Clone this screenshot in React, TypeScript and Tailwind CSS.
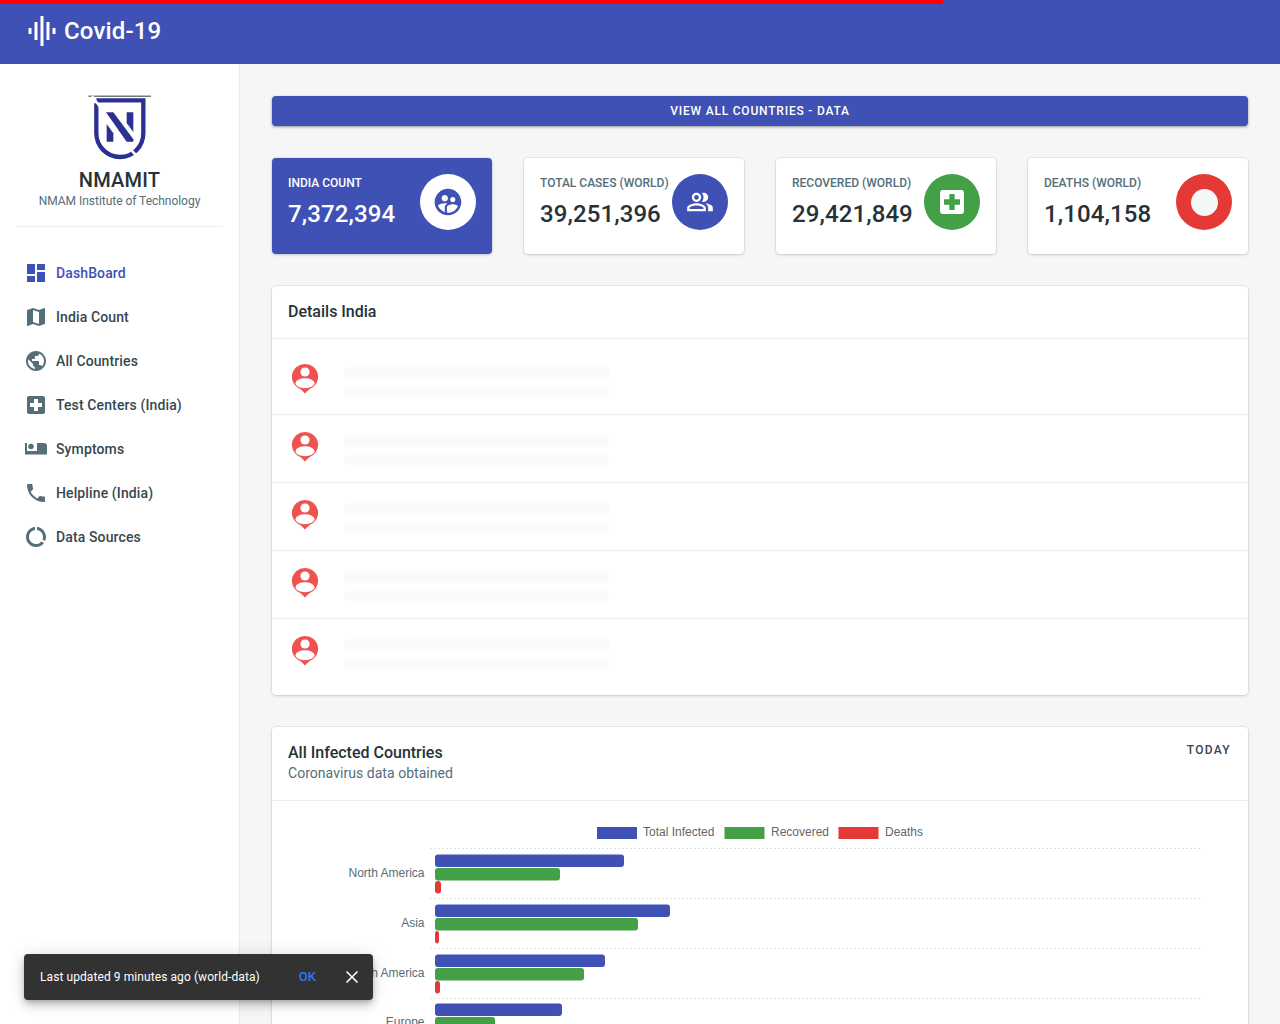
import React from 'react';

const P = {
  dashboard: 'M3 13h8V3H3v10zm0 8h8v-6H3v6zm10 0h8V11h-8v10zm0-18v6h8V3h-8z',
  map: 'M20.5 3l-.16.03L15 5.1 9 3 3.36 4.9c-.21.07-.36.25-.36.48V20.5c0 .28.22.5.5.5l.16-.03L9 18.9l6 2.1 5.64-1.9c.21-.07.36-.25.36-.48V3.5c0-.28-.22-.5-.5-.5zM15 19l-6-2.11V5l6 2.11V19z',
  globe: 'M12 2C6.48 2 2 6.48 2 12s4.48 10 10 10 10-4.48 10-10S17.52 2 12 2zm-1 17.93c-3.95-.49-7-3.85-7-7.93 0-.62.08-1.21.21-1.79L9 15v1c0 1.1.9 2 2 2v1.93zm6.9-2.54c-.26-.81-1-1.39-1.9-1.39h-1v-3c0-.55-.45-1-1-1H8v-2h2c.55 0 1-.45 1-1V7h2c1.1 0 2-.9 2-2v-.41c2.93 1.19 5 4.06 5 7.41 0 2.08-.8 3.97-2.1 5.39z',
  hospital: 'M19 3H5c-1.1 0-1.99.9-1.99 2L3 19c0 1.1.9 2 2 2h14c1.1 0 2-.9 2-2V5c0-1.1-.9-2-2-2zm-1 11h-4v4h-4v-4H6v-4h4V6h4v4h4v4z',
  phone: 'M6.62 10.79c1.44 2.83 3.76 5.14 6.59 6.59l2.2-2.2c.27-.27.67-.36 1.02-.24 1.12.37 2.33.57 3.57.57.55 0 1 .45 1 1V20c0 .55-.45 1-1 1-9.39 0-17-7.61-17-17 0-.55.45-1 1-1h3.5c.55 0 1 .45 1 1 0 1.25.2 2.45.57 3.57.11.35.03.74-.25 1.02l-2.2 2.2z',
  usage: 'M13 2.05v3.03c3.39.49 6 3.39 6 6.92 0 .9-.18 1.75-.48 2.54l2.6 1.53c.56-1.24.88-2.62.88-4.07 0-5.18-3.95-9.45-9-9.95zM12 19c-3.87 0-7-3.13-7-7 0-3.53 2.61-6.43 6-6.92V2.05c-5.06.5-9 4.76-9 9.95 0 5.52 4.47 10 9.99 10 3.31 0 6.24-1.61 8.06-4.09l-2.6-1.53C16.17 17.98 14.21 19 12 19z',
  eq: 'M7 18h2V6H7v12zm4 4h2V2h-2v20zm-8-8h2v-4H3v4zm12 4h2V6h-2v12zm4-8v4h2v-4h-2z',
  supervised: 'M11.99 2c-5.52 0-10 4.48-10 10s4.48 10 10 10 10-4.48 10-10-4.48-10-10-10zm3.61 6.34c1.07 0 1.93.86 1.93 1.93 0 1.07-.86 1.93-1.93 1.93-1.07 0-1.93-.86-1.93-1.93-.01-1.07.86-1.93 1.93-1.93zm-6-1.58c1.3 0 2.36 1.06 2.36 2.36 0 1.3-1.06 2.36-2.36 2.36s-2.36-1.06-2.36-2.36c0-1.31 1.05-2.36 2.36-2.36zm0 9.13v3.75c-2.4-.75-4.3-2.6-5.14-4.96 1.05-1.12 3.67-1.69 5.14-1.69.53 0 1.2.08 1.9.22-1.64.87-1.9 2.02-1.9 2.68zM11.99 20c-.27 0-.53-.01-.79-.04v-4.07c0-1.42 2.94-2.13 4.4-2.13 1.07 0 2.92.39 3.84 1.15-1.17 2.97-4.06 5.09-7.45 5.09z',
  people: 'M16.67 13.13C18.04 14.06 19 15.32 19 17v3h4v-3c0-2.18-3.57-3.47-6.33-3.87zM15 12c2.21 0 4-1.79 4-4s-1.79-4-4-4c-.47 0-.91.1-1.33.24C14.5 5.27 15 6.58 15 8s-.5 2.73-1.33 3.76c.42.14.86.24 1.33.24zM9 12c2.21 0 4-1.79 4-4s-1.79-4-4-4-4 1.79-4 4 1.79 4 4 4zm0-6c1.1 0 2 .9 2 2s-.9 2-2 2-2-.9-2-2 .9-2 2-2zM9 13c-2.67 0-8 1.34-8 4v3h16v-3c0-2.66-5.33-4-8-4zm6 5H3v-.99C3.2 16.29 6.3 15 9 15s5.8 1.29 6 2v1z',
};

const Icon = ({ d, size = 24, className = '' }: { d: string; size?: number; className?: string }) => (
  <svg width={size} height={size} viewBox="0 0 24 24" fill="currentColor" className={`shrink-0 ${className}`}>
    <path d={d} />
  </svg>
);

const BedIcon = () => (
  <div className="w-6 h-6 flex items-center justify-center shrink-0">
    <svg width="22" height="12" viewBox="0 0 22 12" fill="currentColor" className="shrink-0">
      <path fillRule="evenodd" d="M0 0h2v8h10V0h7c1.7 0 3 1.3 3 3v8.5H0V0z" />
      <circle cx="6" cy="3.5" r="2.7" />
    </svg>
  </div>
);

const Logo = () => (
  <svg width="80" height="75" viewBox="0 0 240 225">
    <rect x="25" y="17" width="188" height="3" fill="#3a3a3a" />
    <path d="M49 31H190V130C190 170 158 201 120 201C82 201 49 170 49 130V40" stroke="#2b3192" strokeWidth="13" fill="none" />
    <line x1="36" y1="18" x2="74" y2="70" stroke="#fff" strokeWidth="7" />
    <line x1="146" y1="172" x2="172" y2="200" stroke="#fff" strokeWidth="8" />
    <path d="M80 102L100 130V155H80z" fill="#2b3192" />
    <path d="M78 67H100L160 148V155H140z" fill="#2b3192" />
    <path d="M140 67H160V126L140 99z" fill="#2b3192" />
  </svg>
);

const nav = [
  { label: 'DashBoard', d: P.dashboard, active: true },
  { label: 'India Count', d: P.map },
  { label: 'All Countries', d: P.globe },
  { label: 'Test Centers (India)', d: P.hospital },
  { label: 'Symptoms', d: '' },
  { label: 'Helpline (India)', d: P.phone },
  { label: 'Data Sources', d: P.usage },
];

const cardClass =
  'bg-white rounded shadow-[0_0_0_1px_rgba(63,63,68,0.05),0_1px_3px_0_rgba(63,63,68,0.2)]';

const stats = [
  { label: 'Total Cases (World)', value: '39,251,396', bg: 'bg-[#3f51b5]', d: P.people, size: 28 },
  { label: 'Recovered (World)', value: '29,421,849', bg: 'bg-[#43a047]', d: P.hospital, size: 32 },
  { label: 'Deaths (World)', value: '1,104,158', bg: 'bg-[#e53935]', d: '', size: 0 },
];

const PinIcon = () => (
  <svg width="28" height="30" viewBox="0 0 28 30" className="shrink-0">
    <path d="M14 0a13 13 0 0 1 4 25.4L14 29.5l-4-4.1A13 13 0 0 1 14 0z" fill="#ef5350" />
    <circle cx="14" cy="8" r="4.6" fill="#fff" />
    <ellipse cx="14" cy="19.3" rx="9.5" ry="5" fill="#fff" />
  </svg>
);

const chartRows = [
  { label: 'North America', y: 854, blue: 624, green: 560, red: 441 },
  { label: 'Asia', y: 904, blue: 670, green: 638, red: 439 },
  { label: 'South America', y: 954, blue: 605, green: 584, red: 440 },
  { label: 'Europe', y: 1003, blue: 562, green: 495, red: 438 },
];

const Bar = ({ y, end, fill }: { y: number; end: number; fill: string }) => (
  <rect x={435} y={y} width={end - 435} height={12.5} rx={3} fill={fill} />
);

const Chart = () => (
  <svg width="976" height="240" viewBox="272 801 976 240" className="block" fontFamily="'Liberation Sans', Arial, sans-serif" fontSize="12">
    {[
      { x: 597, fill: '#3f51b5', text: 'Total Infected', tx: 643 },
      { x: 724.5, fill: '#43a047', text: 'Recovered', tx: 771 },
      { x: 838.5, fill: '#e53935', text: 'Deaths', tx: 885 },
    ].map((l) => (
      <g key={l.text}>
        <rect x={l.x} y={827} width={40} height={12} fill={l.fill} />
        <text x={l.tx} y={836} fill="#666">{l.text}</text>
      </g>
    ))}
    {[848.5, 898.5, 948.5, 998.5].map((y) => (
      <line key={y} x1={430} x2={1203} y1={y} y2={y} stroke="rgba(0,0,0,0.12)" strokeDasharray="2 2" />
    ))}
    {chartRows.map((r) => (
      <g key={r.label}>
        <text x={424.5} y={r.y + 23} textAnchor="end" fill="#546e7a">{r.label}</text>
        <Bar y={r.y + 0.5} end={r.blue} fill="#3f51b5" />
        <Bar y={r.y + 14} end={r.green} fill="#43a047" />
        <Bar y={r.y + 27} end={r.red} fill="#e53935" />
      </g>
    ))}
  </svg>
);

export default function App() {
  return (
    <div className="relative h-[1024px] overflow-hidden flex flex-col bg-[#f4f6f8] font-['Roboto',sans-serif] text-[#263238]">
      <header className="relative h-16 shrink-0 bg-[#3f51b5] flex items-center pl-6 pb-[3px] text-white">
        <div className="absolute left-0 top-0 h-1 w-[943px] bg-[#ff0000]" />
        <Icon d={P.eq} size={36} />
        <span className="ml-1 text-2xl font-medium tracking-[0.15px]">Covid-19</span>
      </header>

      <div className="flex flex-1 min-h-0">
        <aside className="w-[240px] shrink-0 bg-white border-r border-[#e9ecef] px-4">
          <div className="flex flex-col items-center pt-[26px] pb-[17px] border-b border-[#eceff1]">
            <Logo />
            <div className="mt-[3px] text-xl leading-6 font-medium tracking-[0.2px] text-[#263238]">NMAMIT</div>
            <div className="mt-px text-xs leading-4 text-[#546e7a] tracking-[-0.03px]">NMAM Institute of Technology</div>
          </div>
          <nav className="mt-6 flex flex-col">
            {nav.map((item) => (
              <div
                key={item.label}
                className={`h-11 flex items-center gap-2 pl-2 text-sm font-medium tracking-[0.12px] ${item.active ? 'text-[#3f51b5]' : 'text-[#37474f]'}`}
              >
                <span className={item.active ? 'text-[#3f51b5]' : 'text-[#546e7a]'}>
                  {item.d ? <Icon d={item.d} /> : <BedIcon />}
                </span>
                {item.label}
              </div>
            ))}
          </nav>
        </aside>

        <main className="flex-1 min-w-0 p-8 flex flex-col gap-8">
          <div className="h-[30px] shrink-0 bg-[#3f51b5] rounded flex items-center justify-center text-white text-xs font-medium tracking-[0.8px] uppercase shadow-[0_1px_3px_rgba(0,0,0,0.4)]">
            View all countries - data
          </div>

          <div className="grid grid-cols-4 gap-8 shrink-0">
            <div className={`${cardClass} !bg-[#3f51b5] h-24 p-4 flex justify-between text-white`}>
              <div>
                <div className="text-xs font-medium uppercase leading-[18px]">India Count</div>
                <div className="mt-[6px] text-2xl font-medium tracking-[0.1px] leading-8">7,372,394</div>
              </div>
              <div className="w-14 h-14 rounded-full bg-white text-[#3f51b5] flex items-center justify-center">
                <Icon d={P.supervised} size={32} />
              </div>
            </div>
            {stats.map((s) => (
              <div key={s.label} className={`${cardClass} h-24 p-4 flex justify-between`}>
                <div>
                  <div className="text-xs font-medium uppercase leading-[18px] text-[#546e7a] whitespace-nowrap">{s.label}</div>
                  <div className="mt-[6px] text-2xl font-medium tracking-[0.1px] leading-8">{s.value}</div>
                </div>
                <div className={`w-14 h-14 shrink-0 rounded-full ${s.bg} text-white flex items-center justify-center`}>
                  {s.d ? <Icon d={s.d} size={s.size} /> : <div className="w-[27px] h-[27px] rounded-full bg-[#f4f6f8]" />}
                </div>
              </div>
            ))}
          </div>

          <section className={`${cardClass} shrink-0`}>
            <div className="h-[53px] px-4 flex items-center border-b border-[#eceff1] text-base font-medium">Details India</div>
            <div className="py-2">
              {[0, 1, 2, 3, 4].map((i) => (
                <div key={i} className={`h-[68px] pl-[19px] pt-[17px] flex gap-[25px] ${i < 4 ? 'border-b border-[#eceff1]' : ''}`}>
                  <PinIcon />
                  <div className="pt-[3px]">
                    <div className="w-[265px] h-3 rounded bg-[#fafafa]" />
                    <div className="mt-2 w-[265px] h-[10px] rounded bg-[#fafafa]" />
                  </div>
                </div>
              ))}
            </div>
          </section>

          <section className={`${cardClass} shrink-0`}>
            <div className="h-[74px] pl-4 pr-[17px] pt-4 flex justify-between border-b border-[#eceff1]">
              <div>
                <div className="text-base font-medium leading-[19px]">All Infected Countries</div>
                <div className="mt-px text-sm leading-5 tracking-[0.04px] text-[#546e7a]">Coronavirus data obtained</div>
              </div>
              <div className="mt-px text-xs font-medium leading-3 tracking-[1.3px] text-[#37474f]">TODAY</div>
            </div>
            <Chart />
          </section>
        </main>
      </div>

      <div className="absolute left-6 top-[954px] w-[349px] h-[46px] rounded bg-[#323232] text-white flex items-center pl-4 pr-[14px] text-xs shadow-[0_3px_5px_-1px_rgba(0,0,0,0.2),0_6px_10px_0_rgba(0,0,0,0.14),0_1px_18px_0_rgba(0,0,0,0.12)]">
        <span className="flex-1 whitespace-nowrap tracking-[0.08px]">Last updated 9 minutes ago (world-data)</span>
        <span className="mr-[29px] text-[13px] font-medium text-[#2979ff]">OK</span>
        <svg width="14" height="14" viewBox="0 0 14 14" stroke="currentColor" strokeWidth="1.6" className="shrink-0">
          <path d="M1.5 1.5l11 11M12.5 1.5l-11 11" />
        </svg>
      </div>
    </div>
  );
}
